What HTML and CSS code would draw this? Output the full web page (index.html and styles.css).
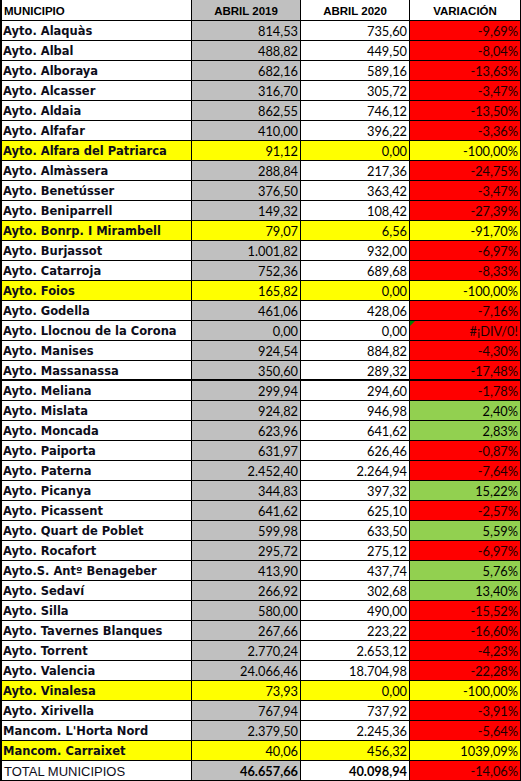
FILE: index.html
```html
<!DOCTYPE html>
<html lang="es">
<head>
<meta charset="utf-8">
<title>Municipios</title>
<link rel="stylesheet" href="styles.css">
</head>
<body>
<div class="sheet">
  <div class="row head"><div class="c name">MUNICIPIO</div><div class="c gray">ABRIL 2019</div><div class="c">ABRIL 2020</div><div class="c">VARIACIÓN</div></div>
  <div class="row"><div class="c name">Ayto. Alaquàs</div><div class="c num gray">814,53</div><div class="c num">735,60</div><div class="c num red">-9,69%</div></div>
  <div class="row"><div class="c name">Ayto. Albal</div><div class="c num gray">488,82</div><div class="c num">449,50</div><div class="c num red">-8,04%</div></div>
  <div class="row"><div class="c name">Ayto. Alboraya</div><div class="c num gray">682,16</div><div class="c num">589,16</div><div class="c num red">-13,63%</div></div>
  <div class="row"><div class="c name">Ayto. Alcasser</div><div class="c num gray">316,70</div><div class="c num">305,72</div><div class="c num red">-3,47%</div></div>
  <div class="row"><div class="c name">Ayto. Aldaia</div><div class="c num gray">862,55</div><div class="c num">746,12</div><div class="c num red">-13,50%</div></div>
  <div class="row"><div class="c name">Ayto. Alfafar</div><div class="c num gray">410,00</div><div class="c num">396,22</div><div class="c num red">-3,36%</div></div>
  <div class="row yellow"><div class="c name">Ayto. Alfara del Patriarca</div><div class="c num">91,12</div><div class="c num">0,00</div><div class="c num">-100,00%</div></div>
  <div class="row"><div class="c name">Ayto. Almàssera</div><div class="c num gray">288,84</div><div class="c num">217,36</div><div class="c num red">-24,75%</div></div>
  <div class="row"><div class="c name">Ayto. Benetússer</div><div class="c num gray">376,50</div><div class="c num">363,42</div><div class="c num red">-3,47%</div></div>
  <div class="row"><div class="c name">Ayto. Beniparrell</div><div class="c num gray">149,32</div><div class="c num">108,42</div><div class="c num red">-27,39%</div></div>
  <div class="row yellow"><div class="c name">Ayto. Bonrp. I Mirambell</div><div class="c num">79,07</div><div class="c num">6,56</div><div class="c num">-91,70%</div></div>
  <div class="row"><div class="c name">Ayto. Burjassot</div><div class="c num gray">1.001,82</div><div class="c num">932,00</div><div class="c num red">-6,97%</div></div>
  <div class="row"><div class="c name">Ayto. Catarroja</div><div class="c num gray">752,36</div><div class="c num">689,68</div><div class="c num red">-8,33%</div></div>
  <div class="row yellow"><div class="c name">Ayto. Foios</div><div class="c num">165,82</div><div class="c num">0,00</div><div class="c num">-100,00%</div></div>
  <div class="row"><div class="c name">Ayto. Godella</div><div class="c num gray">461,06</div><div class="c num">428,06</div><div class="c num red">-7,16%</div></div>
  <div class="row"><div class="c name">Ayto. Llocnou de la Corona</div><div class="c num gray">0,00</div><div class="c num">0,00</div><div class="c num red err">#¡DIV/0!</div></div>
  <div class="row"><div class="c name">Ayto. Manises</div><div class="c num gray">924,54</div><div class="c num">884,82</div><div class="c num red">-4,30%</div></div>
  <div class="row thick"><div class="c name">Ayto. Massanassa</div><div class="c num gray">350,60</div><div class="c num">289,32</div><div class="c num red">-17,48%</div></div>
  <div class="row"><div class="c name">Ayto. Meliana</div><div class="c num gray">299,94</div><div class="c num">294,60</div><div class="c num red">-1,78%</div></div>
  <div class="row"><div class="c name">Ayto. Mislata</div><div class="c num gray">924,82</div><div class="c num">946,98</div><div class="c num green">2,40%</div></div>
  <div class="row"><div class="c name">Ayto. Moncada</div><div class="c num gray">623,96</div><div class="c num">641,62</div><div class="c num green">2,83%</div></div>
  <div class="row"><div class="c name">Ayto. Paiporta</div><div class="c num gray">631,97</div><div class="c num">626,46</div><div class="c num red">-0,87%</div></div>
  <div class="row"><div class="c name">Ayto. Paterna</div><div class="c num gray">2.452,40</div><div class="c num">2.264,94</div><div class="c num red">-7,64%</div></div>
  <div class="row"><div class="c name">Ayto. Picanya</div><div class="c num gray">344,83</div><div class="c num">397,32</div><div class="c num green">15,22%</div></div>
  <div class="row"><div class="c name">Ayto. Picassent</div><div class="c num gray">641,62</div><div class="c num">625,10</div><div class="c num red">-2,57%</div></div>
  <div class="row"><div class="c name">Ayto. Quart de Poblet</div><div class="c num gray">599,98</div><div class="c num">633,50</div><div class="c num green">5,59%</div></div>
  <div class="row"><div class="c name">Ayto. Rocafort</div><div class="c num gray">295,72</div><div class="c num">275,12</div><div class="c num red">-6,97%</div></div>
  <div class="row"><div class="c name">Ayto.S. Antº Benageber</div><div class="c num gray">413,90</div><div class="c num">437,74</div><div class="c num green">5,76%</div></div>
  <div class="row"><div class="c name">Ayto. Sedaví</div><div class="c num gray">266,92</div><div class="c num">302,68</div><div class="c num green">13,40%</div></div>
  <div class="row"><div class="c name">Ayto. Silla</div><div class="c num gray">580,00</div><div class="c num">490,00</div><div class="c num red">-15,52%</div></div>
  <div class="row"><div class="c name">Ayto. Tavernes Blanques</div><div class="c num gray">267,66</div><div class="c num">223,22</div><div class="c num red">-16,60%</div></div>
  <div class="row"><div class="c name">Ayto. Torrent</div><div class="c num gray">2.770,24</div><div class="c num">2.653,12</div><div class="c num red">-4,23%</div></div>
  <div class="row"><div class="c name">Ayto. Valencia</div><div class="c num gray">24.066,46</div><div class="c num">18.704,98</div><div class="c num red">-22,28%</div></div>
  <div class="row yellow"><div class="c name">Ayto. Vinalesa</div><div class="c num">73,93</div><div class="c num">0,00</div><div class="c num">-100,00%</div></div>
  <div class="row"><div class="c name">Ayto. Xirivella</div><div class="c num gray">767,94</div><div class="c num">737,92</div><div class="c num red">-3,91%</div></div>
  <div class="row"><div class="c name">Mancom. L'Horta Nord</div><div class="c num gray">2.379,50</div><div class="c num">2.245,36</div><div class="c num red">-5,64%</div></div>
  <div class="row yellow"><div class="c name">Mancom. Carraixet</div><div class="c num">40,06</div><div class="c num">456,32</div><div class="c num">1039,09%</div></div>
  <div class="row total"><div class="c name">TOTAL MUNICIPIOS</div><div class="c num gray strong">46.657,66</div><div class="c num strong">40.098,94</div><div class="c num red">-14,06%</div></div>
</div>
</body>
</html>
```

FILE: styles.css
```css
html, body {
  margin: 0;
  padding: 0;
  background: #ffffff;
}

.sheet {
  width: 521px;
  box-sizing: border-box;
  background: #000;
  padding: 0 1px 1px 2px;
  display: flex;
  flex-direction: column;
  gap: 1px;
}

.row {
  display: grid;
  grid-template-columns: 189px 108px 108px 110px;
  column-gap: 1px;
  height: 19px;
}

.row.head {
  height: 20px;
}

.c {
  background: #fff;
  height: 100%;
  box-sizing: border-box;
  padding-top: 2px;
  line-height: 17px;
  white-space: nowrap;
  overflow: hidden;
  color: #000;
  position: relative;
}

.name {
  font-family: "DejaVu Sans", sans-serif;
  font-weight: bold;
  font-size: 11.5px;
  padding-left: 1px;
  color: #0d0d1a;
}

.num {
  font-family: Lato, "Open Sans", sans-serif;
  font-size: 12.8px;
  text-align: right;
  padding-right: 2px;
}

.head .c {
  font-family: "Liberation Sans", Arial, sans-serif;
  font-weight: bold;
  font-size: 11.5px;
  text-align: center;
  padding-top: 4px;
  line-height: 15px;
  color: #000;
}

.head .c.name {
  text-align: left;
  padding-left: 2px;
}

.gray {
  background: #c0c0c0;
}

.red {
  background: #ff0000;
  color: #1a0000;
}

.green {
  background: #92d050;
}

.yellow .c {
  background: #ffff00;
}

.thick .c {
  box-shadow: inset 0 -1px 0 #000;
}

.total .name {
  font-family: "Liberation Sans", Arial, sans-serif;
  font-weight: normal;
  font-size: 13px;
  padding-left: 2px;
}

.strong {
  font-weight: bold;
}

.err::before {
  content: "";
  position: absolute;
  left: 0;
  top: 0;
  border-top: 5px solid #008000;
  border-right: 5px solid transparent;
}
```
